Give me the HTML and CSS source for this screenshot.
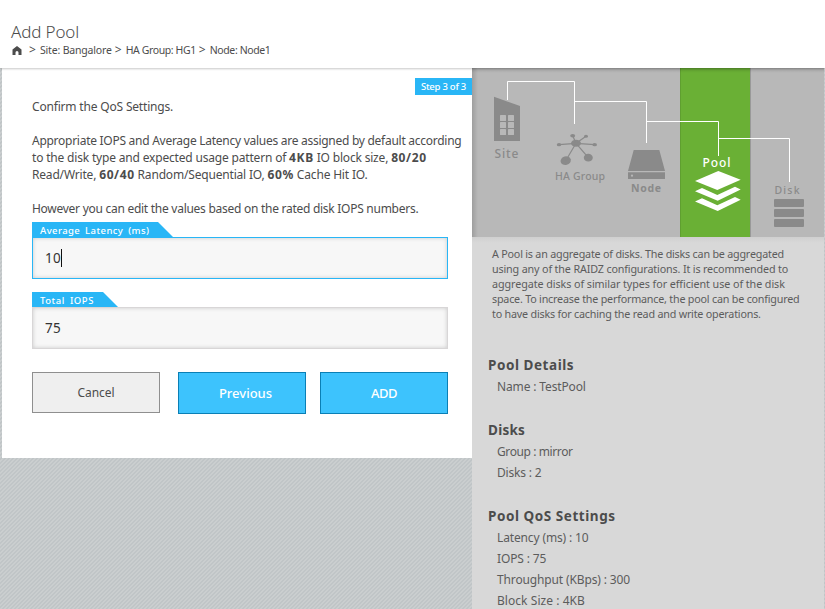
FILE: index.html
```html
<!DOCTYPE html>
<html lang="en">
<head>
<meta charset="utf-8">
<title>Add Pool</title>
<link rel="stylesheet" href="styles.css">
</head>
<body>
<header class="header">
  <h1 class="title">Add Pool</h1>
  <nav class="crumbs">
    <svg class="home" viewBox="0 0 10 9" width="10" height="9"><path d="M5 0 .5 3.500V9h3V6.500Q3.500 5 5 5t1.500 1.500V9h3V3.500z" fill="#4c4c4c"/></svg>
    <span class="sep">&gt;</span><span class="t2">Site: Bangalore</span><span class="sep">&gt;</span><span class="t4">HA Group: HG1</span><span class="sep">&gt;</span><span class="t4">Node: Node1</span>
  </nav>
</header>
<div class="main">
  <section class="form">
    <span class="step">Step 3 of 3</span>
    <p class="t2">Confirm the QoS Settings.</p>
    <p>
      <span class="line t3">Appropriate IOPS and Average Latency values are assigned by default according</span>
      <span class="line t2">to the disk type and expected usage pattern of <b>4KB</b> IO block size, <b>80/20</b></span>
      <span class="line t2">Read/Write, <b>60/40</b> Random/Sequential IO, <b>60%</b> Cache Hit IO.</span>
    </p>
    <p class="last t3">However you can edit the values based on the rated disk IOPS numbers.</p>
    <div class="field">
      <label class="tag tag-latency">Average Latency (ms)</label>
      <div class="input focus">10<i class="caret"></i></div>
    </div>
    <div class="field">
      <label class="tag tag-iops">Total IOPS</label>
      <div class="input">75</div>
    </div>
    <div class="actions">
      <button class="btn cancel">Cancel</button>
      <button class="btn primary prev">Previous</button>
      <button class="btn primary add">ADD</button>
    </div>
  </section>
  <aside class="side">
    <svg class="diagram" width="352" height="169" viewBox="0 0 352 169">
      <defs>
        <linearGradient id="top" x2="0" y2="1"><stop stop-opacity=".12"/><stop offset="1" stop-opacity="0"/></linearGradient>
        <linearGradient id="left"><stop stop-opacity=".14"/><stop offset="1" stop-opacity="0"/></linearGradient>
      </defs>
      <rect x="208" y="0" width="70" height="169" fill="#6ab035"/>
      <path d="M208.500 0V169" stroke="#5f9f30"/>
      <path d="M278.500 0V169" stroke="#999"/>
      <rect width="352" height="5" fill="url(#top)"/>
      <rect width="6" height="169" fill="url(#left)"/>
      <path d="M35.500 32V13.500H102.500V56M102.500 33.500H174.500V75M174.500 53.500H246.500V88M246.500 70.500H317.500V114" fill="none" stroke="#fff"/>
      <g fill="#8a8a8a">
        <path d="M22 28.700 48 38V73H22z"/>
        <path d="M161.700 82H187.300L193 103H156zM156 104.200H193V111H156z"/>
        <rect x="302" y="131" width="30" height="8" rx="1"/>
        <rect x="302" y="141" width="30" height="8" rx="1"/>
        <rect x="302" y="151" width="30" height="8" rx="1"/>
        <ellipse cx="104" cy="75.300" rx="5" ry="3.500"/>
        <ellipse cx="100.700" cy="67.700" rx="2.500" ry="1.700"/>
        <ellipse cx="114" cy="68.300" rx="2" ry="1.500"/>
        <ellipse cx="87" cy="76.700" rx="2.200" ry="1.600"/>
        <ellipse cx="122.700" cy="76.700" rx="2.300" ry="1.600"/>
        <ellipse cx="93.700" cy="92.700" rx="5.200" ry="4.300" transform="rotate(-15 93.700 92.700)"/>
        <ellipse cx="116.300" cy="89.700" rx="4.500" ry="3.900"/>
      </g>
      <path d="M87 76.700 104 75.300 122.700 76.700M100.700 67.700 104 75.300 114 68.300M93.700 92.700 104 75.300 116.300 89.700" stroke="#8a8a8a" stroke-width="1.200" fill="none"/>
      <g fill="#b8b8b8">
        <rect x="28" y="47" width="6" height="6" rx=".5"/><rect x="36" y="47" width="6" height="6" rx=".5"/>
        <rect x="28" y="54" width="6" height="6" rx=".5"/><rect x="36" y="54" width="6" height="6" rx=".5"/>
        <rect x="28" y="61" width="6" height="6" rx=".5"/><rect x="36" y="61" width="6" height="6" rx=".5"/>
        <circle cx="160" cy="107.700" r="1.100"/>
      </g>
      <g fill="#fff">
        <path d="M246.300 103 268.700 111.700 245.300 122 223 113z"/>
        <path d="M223 123.300 230 120 245.300 127 263 118.700 268.700 121.500 245.700 132.700z"/>
        <path d="M223 133.600 230 130.300 245.300 137.300 263 129 268.700 131.800 245.700 143z"/>
      </g>
      <g class="labels">
        <text x="22.500" y="90" textLength="24" font-size="12">Site</text>
        <text x="83" y="112" textLength="50" font-size="10.500">HA Group</text>
        <text x="159" y="124" textLength="30" font-size="10.500" class="bold">Node</text>
        <text x="230.500" y="99" textLength="28" font-size="12" class="on">Pool</text>
        <text x="302.500" y="126" textLength="25" font-size="10.500">Disk</text>
      </g>
    </svg>
    <div class="about">
      <span class="line">A Pool is an aggregate of disks. The disks can be aggregated</span>
      <span class="line about-2">using any of the RAIDZ configurations. It is recommended to</span>
      <span class="line t1">aggregate disks of similar types for efficient use of the disk</span>
      <span class="line">space. To increase the performance, the pool can be configured</span>
      <span class="line">to have disks for caching the read and write operations.</span>
    </div>
    <h2>Pool Details</h2>
    <ul><li>Name : TestPool</li></ul>
    <h2 class="snug">Disks</h2>
    <ul><li class="t4">Group : mirror</li><li class="t2">Disks : 2</li></ul>
    <h2>Pool QoS Settings</h2>
    <ul><li>Latency (ms) : 10</li><li>IOPS : 75</li><li>Throughput (KBps) : 300</li><li class="t0">Block Size : 4KB</li></ul>
  </aside>
</div>
</body>
</html>
```
FILE: styles.css
```css
* { box-sizing: border-box; }
body {
  margin: 0;
  height: 609px;
  overflow: hidden;
  font: 12px/17px "Noto Sans", "Open Sans", sans-serif;
  color: #4c4c4c;
  background: linear-gradient(135deg, #cacecf 25%, #c0c5c7 25% 50%, #cacecf 50% 75%, #c0c5c7 75%) 0 0 / 4px 4px;
}
p, h1, h2, ul { margin: 0; padding: 0; }
ul { list-style: none; }
.line { display: block; white-space: nowrap; }

.header {
  position: relative;
  z-index: 1;
  height: 68px;
  padding: 20px 0 0 11px;
  background: #fff;
  box-shadow: 0 1px 2px rgba(0,0,0,.22);
}
.title { font-size: 17px; line-height: 24px; font-weight: 350; letter-spacing: -.15px; }
.crumbs { display: flex; align-items: center; height: 12px; font-size: 10.5px; line-height: 12px; }
.home { margin: 0 4px 0 1px; }
.sep { width: 6px; margin: 0 4px; font-size: 12px; text-indent: -1px; }

.main { display: flex; height: 541px; align-items: flex-start; }
.form {
  position: relative;
  width: 470px;
  height: 390px;
  margin-left: 2px;
  padding: 30px 24px 0 30px;
  background: #fff;
}
.form p { margin-bottom: 17px; white-space: nowrap; }
.form p.last { margin-bottom: 5px; }
.form b { letter-spacing: .6px; }
.step {
  position: absolute;
  right: 0;
  top: 10px;
  width: 57px;
  height: 17px;
  padding-left: 6px;
  background: #29b6f6;
  color: #fff;
  font-size: 9.5px;
  font-weight: 500;
  line-height: 17px;
  letter-spacing: -.25px;
  white-space: nowrap;
}
.field { margin-bottom: 13px; }
.tag {
  display: block;
  height: 15px;
  padding-left: 8px;
  background: #29b6f6;
  color: #fff;
  font-size: 9.5px;
  font-weight: 500;
  line-height: 17px;
  letter-spacing: .42px;
  word-spacing: 2px;
  white-space: nowrap;
  clip-path: polygon(0 0, calc(100% - 15px) 0, 100% 100%, 0 100%);
}
.tag-latency { width: 141px; }
.tag-iops { width: 86px; letter-spacing: .55px; }
.input {
  display: flex;
  align-items: center;
  width: 416px;
  height: 42px;
  padding-left: 12px;
  border: 1px solid #d8d6d7;
  background: #f7f7f7;
  box-shadow: inset 0 0 4px rgba(0,0,0,.18);
  color: #333;
  font-size: 13.5px;
  letter-spacing: .3px;
}
.input.focus { border-color: #29b6f6; }
.caret { width: 1px; height: 18px; background: #111; }
.actions { display: flex; align-items: flex-start; margin-top: 23px; }
.btn { width: 128px; height: 42px; padding: 0; font: inherit; font-size: 13px; }
.cancel { height: 41px; margin-right: 18px; border: 1px solid #8f8f8f; background: #efefef; color: #4c4c4c; font-size: 12px; letter-spacing: -.05px; }
.primary { border: 1px solid #0a7fb5; background: #3dc3fd; color: #fff; font-weight: 500; }
.prev { padding-left: 7px; }
.add { margin-left: 14px; letter-spacing: -.5px; }

.side { width: 352px; height: 541px; background: #d8d8d8; }
.diagram { display: block; background: #b8b8b8; }
.labels { fill: #8a8a8a; font-weight: 500; }
.labels .bold { font-weight: 700; }
.labels .on { fill: #fff; }
.about {
  padding: 10px 20px 0;
  background: linear-gradient(#cfcfcf, #d8d8d8 6px);
  font-size: 10.75px;
  line-height: 15px;
  letter-spacing: -.21px;
  color: #5c5c5c;
}
.about-2 { letter-spacing: -.15px; }
.side h2 { margin: 22px 0 0 16px; font-size: 13.5px; line-height: 22px; letter-spacing: .55px; }
.side h2.snug { letter-spacing: .25px; }
.side .about + h2 { margin-top: 32px; }
.side li { margin-left: 25px; line-height: 21px; font-size: 12px; letter-spacing: -.14px; color: #5c5c5c; }

/* tracking steps */
.side .t0 { letter-spacing: .05px; }
.t1 { letter-spacing: -.07px; }
.t2, .side .t2 { letter-spacing: -.18px; }
.t3 { letter-spacing: -.27px; }
.t4, .side .t4 { letter-spacing: -.4px; }
```
